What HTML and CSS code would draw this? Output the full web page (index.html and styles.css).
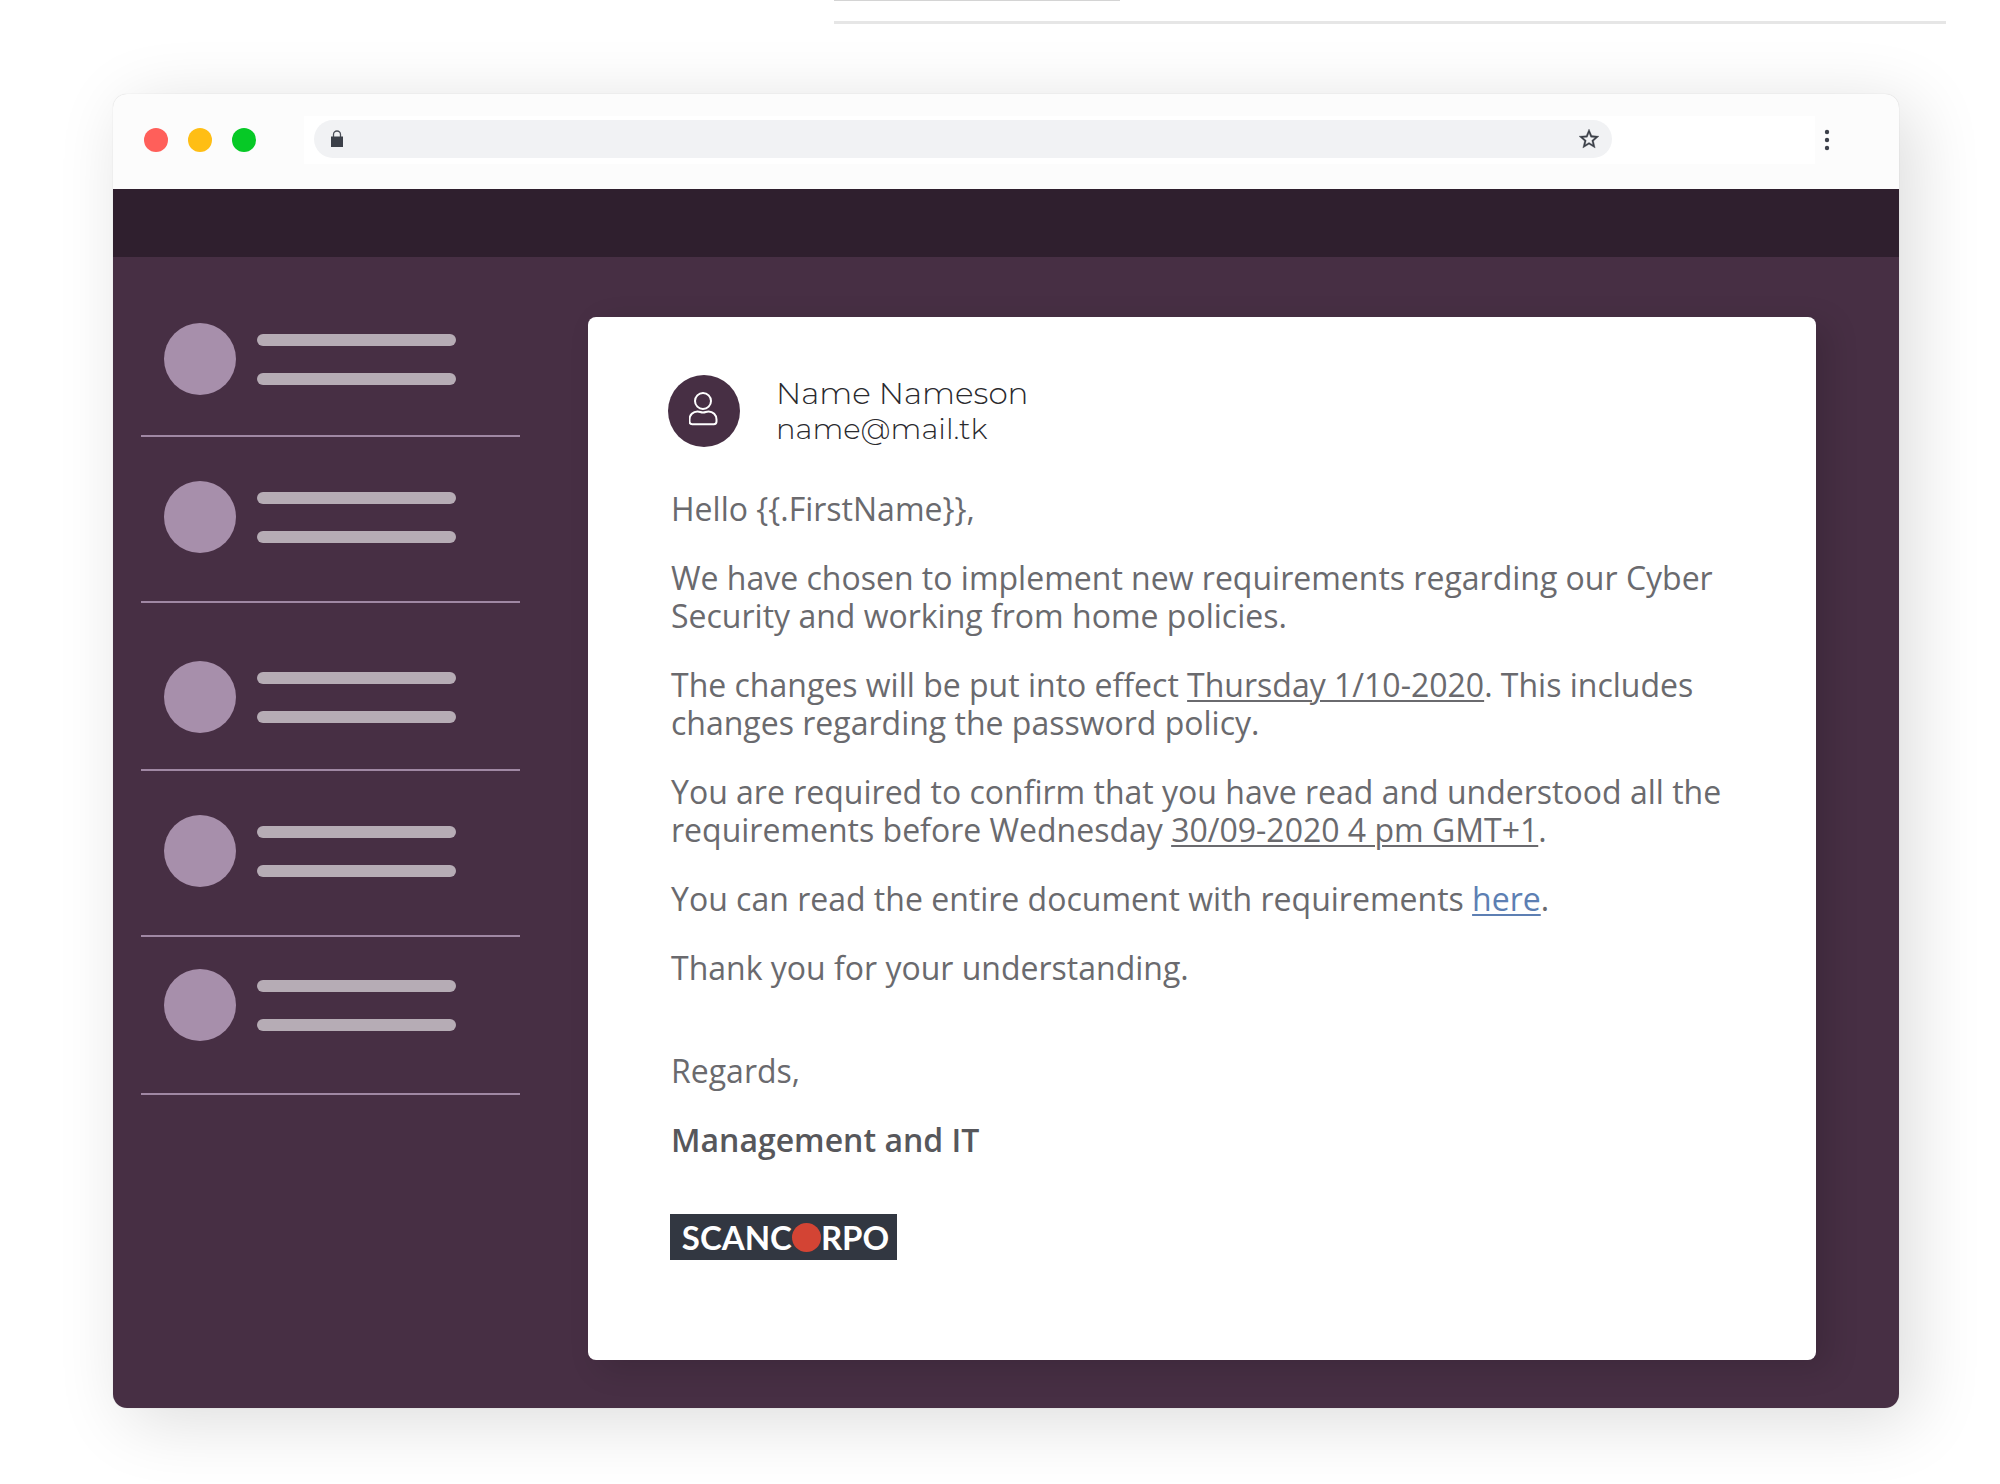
FILE: index.html
```html
<!DOCTYPE html>
<html lang="en">
<head>
  <meta charset="UTF-8">
  <meta name="viewport" content="width=device-width, initial-scale=1.0">
  <title>Name Nameson - Mail</title>
  <link rel="stylesheet" href="styles.css">
</head>
<body>
  <header class="page-top">
    <div class="rule rule-short"></div>
    <div class="rule rule-long"></div>
  </header>

  <main class="window">
    <!-- Browser chrome -->
    <div class="toolbar">
      <div class="lights">
        <span class="light red"></span>
        <span class="light yellow"></span>
        <span class="light green"></span>
      </div>
      <div class="address-area">
        <div class="address-bar">
          <svg class="lock" viewBox="0 0 12 18" aria-hidden="true">
            <path d="M2.5 7V4.5a3.5 3.5 0 0 1 7 0V7" fill="none" stroke="#4c5059" stroke-width="1.3"/>
            <rect x="0" y="6.5" width="12" height="10.5" fill="#3c4049"/>
          </svg>
          <input type="text" class="address" aria-label="Address">
          <button type="button" class="icon-button" aria-label="Bookmark">
            <svg width="24" height="24" viewBox="0 0 24 24" aria-hidden="true">
              <path d="M22 9.24l-7.19-.62L12 2 9.19 8.63 2 9.24l5.46 4.73L5.82 21 12 17.27 18.18 21l-1.63-7.03L22 9.24zM12 15.4l-3.76 2.27 1-4.28-3.32-2.88 4.38-.38L12 6.1l1.71 4.04 4.38.38-3.32 2.88 1 4.28L12 15.4z" fill="#3c4049" stroke="#3c4049" stroke-width=".3"/>
            </svg>
          </button>
        </div>
      </div>
      <button type="button" class="icon-button menu" aria-label="Menu">
        <svg width="6" height="22" viewBox="0 0 6 22" aria-hidden="true">
          <circle cx="3" cy="3" r="2.2" fill="#3c4049"/>
          <circle cx="3" cy="11" r="2.2" fill="#3c4049"/>
          <circle cx="3" cy="19" r="2.2" fill="#3c4049"/>
        </svg>
      </button>
    </div>

    <div class="app-bar"></div>

    <div class="content">
      <!-- Inbox placeholders -->
      <ul class="inbox">
        <li class="inbox-item"><span class="circle"></span><span class="lines"></span></li>
        <li class="inbox-item"><span class="circle"></span><span class="lines"></span></li>
        <li class="inbox-item"><span class="circle"></span><span class="lines"></span></li>
        <li class="inbox-item"><span class="circle"></span><span class="lines"></span></li>
        <li class="inbox-item"><span class="circle"></span><span class="lines"></span></li>
      </ul>

      <article class="mail">
        <div class="sender">
          <div class="avatar">
            <svg width="30" height="34" viewBox="0 0 30 34" fill="none" stroke="#fff" stroke-width="2" aria-hidden="true">
              <circle cx="14" cy="9" r="8"/>
              <path d="M8.500 19.500c2.500 0 3 1 5.500 1s3-1 5.500-1c4.500 0 8 3.500 8 8V29.500c0 1.700-1 2.700-2.700 2.700H3.200c-1.700 0-2.700-1-2.700-2.700V27.500c0-4.500 3.500-8 8-8z"/>
            </svg>
          </div>
          <div class="sender-info">
            <div class="sender-name">Name Nameson</div>
            <div class="sender-mail">name@mail.tk</div>
          </div>
        </div>

        <div class="mail-body">
          <p>Hello {{.FirstName}},</p>
          <p>We have chosen to implement new requirements regarding our Cyber Security and working from home policies.</p>
          <p>The changes will be put into effect <u>Thursday 1/10-2020</u>. This includes changes regarding the password policy.</p>
          <p>You are required to confirm that you have read and understood all the requirements before Wednesday <u>30/09-2020 4 pm GMT+1</u>.</p>
          <p>You can read the entire document with requirements <a href="#">here</a>.</p>
          <p>Thank you for your understanding.</p>
          <p class="regards">Regards,</p>
          <p><strong>Management and IT</strong></p>
        </div>

        <div class="logo">SCANC<span class="logo-dot"></span>RPO</div>
      </article>
    </div>
  </main>
</body>
</html>
```
FILE: styles.css
```css
* {
  box-sizing: border-box;
}
body {
  margin: 0;
  background: #fff;
  font-family: "Open Sans", "Noto Sans", sans-serif;
}
.page-top {
  height: 94px;
  padding: 0 54px 0 834px;
}
.rule-short {
  width: 286px;
  height: 1px;
  background: #d4d4d4;
}
.rule-long {
  height: 3px;
  margin-top: 20px;
  background: #e6e6e6;
}
.window {
  margin: 0 101px 74px 113px;
  border-radius: 14px;
  background: #fcfcfc;
  box-shadow: 14px 12px 70px rgba(0, 0, 0, 0.14), 0 0 1px rgba(0, 0, 0, 0.2);
}

/* Toolbar */
.toolbar {
  display: flex;
  align-items: center;
  height: 95px;
  padding: 0 69px 4px 31px;
}
.lights {
  display: flex;
  gap: 20px;
  width: 160px;
}
.light {
  width: 24px;
  height: 24px;
  border-radius: 50%;
}
.red {
  background: #ff5f5a;
}
.yellow {
  background: #ffbe14;
}
.green {
  background: #06c926;
}
.address-area {
  flex: 1;
  padding: 4px 203px 6px 10px;
  background: #fff;
}
.address-bar {
  display: flex;
  align-items: center;
  height: 38px;
  padding: 0 11px 0 17px;
  border-radius: 19px;
  background: #f1f2f4;
}
.lock {
  width: 12px;
  height: 18px;
}
.address {
  flex: 1;
  margin: 0 10px;
  border: none;
  outline: none;
  background: none;
  font-size: 18px;
}
.icon-button {
  display: flex;
  padding: 0;
  border: none;
  background: none;
  cursor: pointer;
}
.menu {
  margin-left: 9px;
}
.app-bar {
  height: 68px;
  background: #2f1f2e;
}

/* Inbox */
.content {
  display: flex;
  padding: 60px 83px 48px 28px;
  border-radius: 0 0 14px 14px;
  background: #472f44;
}
.inbox {
  flex: none;
  width: 379px;
  margin: 0 68px 0 0;
  padding: 0;
  list-style: none;
}
.inbox-item {
  display: flex;
  gap: 21px;
  padding: 44px 0 48px 23px;
  border-bottom: 2px solid #a088a4;
}
.inbox-item:nth-child(1) {
  padding-top: 6px;
  padding-bottom: 40px;
}
.inbox-item:nth-child(3) {
  padding-top: 58px;
  padding-bottom: 36px;
}
.inbox-item:nth-child(5) {
  padding-top: 32px;
  padding-bottom: 52px;
}
.circle {
  width: 72px;
  height: 72px;
  border-radius: 50%;
  background: #a78fab;
}
.lines::before,
.lines::after {
  content: "";
  display: block;
  width: 199px;
  height: 12px;
  margin-top: 11px;
  border-radius: 6px;
  background: #b6acb5;
}
.lines::after {
  margin-top: 27px;
}

/* Mail */
.mail {
  flex: 1;
  padding: 58px 84px 100px 80px;
  border-radius: 8px;
  background: #fff;
  box-shadow: 12px 8px 32px rgba(0, 0, 0, 0.14);
}
.sender {
  display: flex;
  gap: 36px;
  margin-bottom: 43px;
}
.avatar {
  display: flex;
  align-items: center;
  justify-content: center;
  width: 72px;
  height: 72px;
  padding-bottom: 4px;
  border-radius: 50%;
  background: #472f44;
}
.sender-info {
  color: #2a2a2e;
  font-family: Montserrat, Inter, sans-serif;
  font-weight: 300;
  line-height: 36px;
}
.sender-name {
  font-size: 31px;
}
.sender-mail {
  font-size: 29px;
}
.mail-body {
  padding-left: 3px;
  color: #6a6a6e;
  font-size: 32px;
  line-height: 38px;
}
.mail-body p {
  margin: 0 0 31px;
}
.mail-body u,
.mail-body a {
  text-decoration-thickness: 2px;
  text-underline-offset: 3px;
}
.mail-body a {
  color: #5d7fb3;
}
.mail-body .regards {
  margin-top: 65px;
}
.mail-body strong {
  color: #57575b;
  font-weight: 600;
}
.logo {
  display: flex;
  align-items: center;
  justify-content: center;
  width: 227px;
  height: 46px;
  margin: 55px 0 0 2px;
  padding-left: 4px;
  background: #323741;
  color: #fff;
  font-family: Lato, sans-serif;
  font-size: 33px;
  font-weight: 700;
}
.logo-dot {
  width: 29px;
  height: 29px;
  border-radius: 50%;
  background: #d34434;
}
```
